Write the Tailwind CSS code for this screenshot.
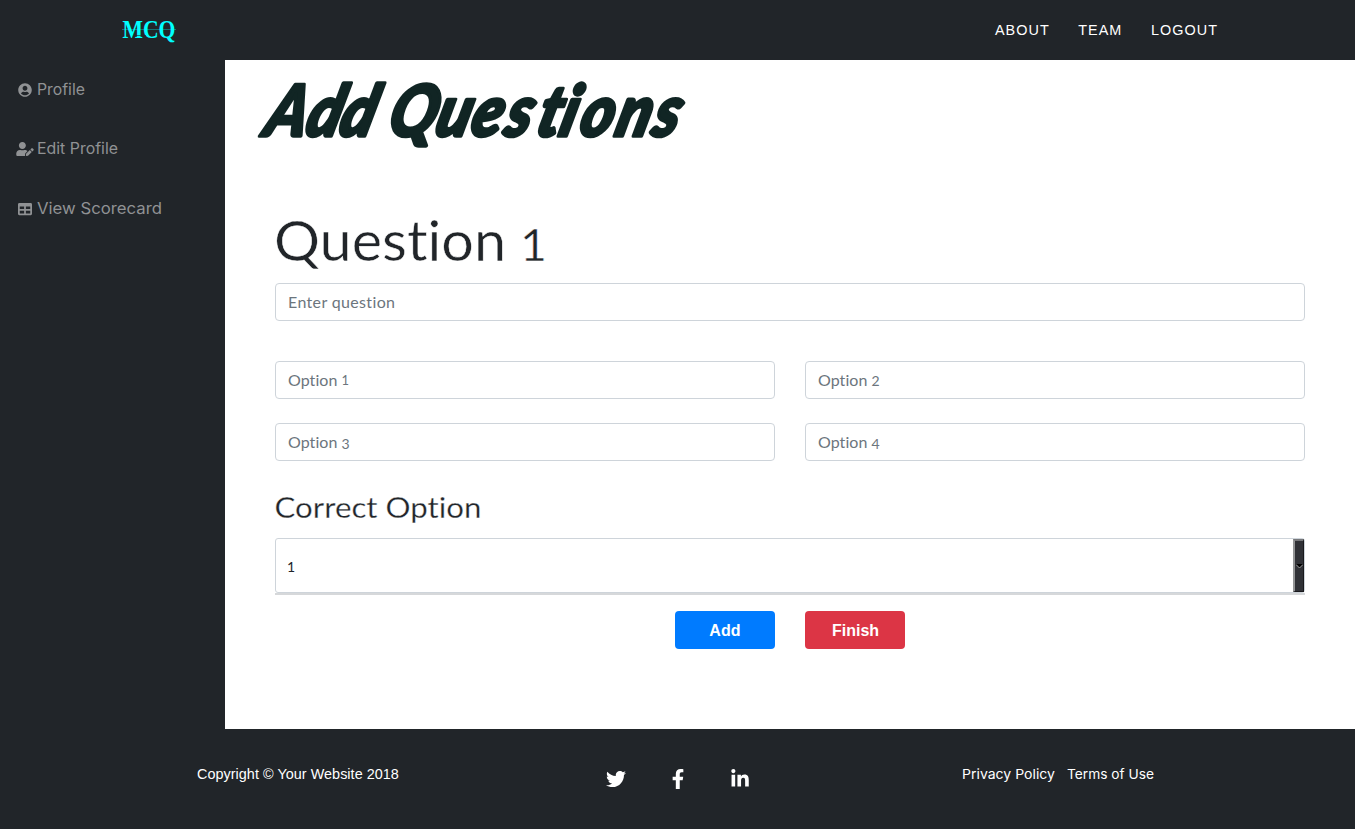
<!DOCTYPE html>
<html lang="en">
<head>
<meta charset="utf-8">
<title>Add Questions</title>
<script src="https://cdn.jsdelivr.net/npm/@tailwindcss/browser@4"></script>
</head>
<body class="w-[1355px] h-[829px] overflow-hidden bg-[#212529] flex flex-col text-[#212529] font-['Lato',sans-serif] [font-variant-ligatures:none]">
<nav class="h-[60px] shrink-0 flex items-center justify-between pl-[122px] pr-[137px]">
  <a class="text-[#00ffff]"><svg class="block w-[70px] h-[40px]" viewBox="0 0 70 40"><text x="0.5" y="27.500" textLength="53" lengthAdjust="spacingAndGlyphs" font-family="Liberation Serif, serif" font-weight="700" font-size="25" fill="currentColor">MCQ</text><path d="M12 25.500h12" stroke="#212529" stroke-width="0.6"/><path d="M0 19.500H54" stroke="currentColor" stroke-width="0.7" opacity=".5"/></svg></a>
  <div class="flex gap-[28.5px] text-white text-[14.4px] leading-[22px] tracking-[1.05px] font-['Liberation_Sans',sans-serif]">
    <a class="-ml-2">ABOUT</a><a>TEAM</a><a>LOGOUT</a>
  </div>
</nav>
<div class="h-[669px] shrink-0 flex">
  <aside class="w-[225px] pt-[17.5px] pl-4 flex flex-col gap-[35.5px] text-[#909294] font-['Inter',sans-serif]">
    <a class="flex items-center h-6"><svg class="w-[18px] h-[14px] mr-[3px]" viewBox="0 0 496 512" fill="currentColor"><path d="M248 8C111 8 0 119 0 256s111 248 248 248 248-111 248-248S385 8 248 8zm0 96c48.600 0 88 39.400 88 88s-39.400 88-88 88-88-39.400-88-88 39.400-88 88-88zm0 344c-58.700 0-111.300-26.600-146.500-68.200 18.800-35.400 55.600-59.800 98.500-59.800 2.400 0 4.800.4 7.100 1.100 13 4.200 26.600 6.900 40.900 6.900s28-2.700 40.900-6.900c2.300-.7 4.700-1.100 7.100-1.100 42.900 0 79.700 24.400 98.500 59.800C359.300 421.400 306.700 448 248 448z"/></svg><svg class="w-[130px] h-6" viewBox="0 0 130 24"><text y="17" textLength="48" lengthAdjust="spacingAndGlyphs" font-size="15.500" fill="currentColor">Profile</text></svg></a>
    <a class="flex items-center h-6"><svg class="w-[18px] h-[14px] mr-[3px]" viewBox="0 0 640 512" fill="currentColor"><path d="M224 256c70.700 0 128-57.300 128-128S294.700 0 224 0 96 57.300 96 128s57.300 128 128 128zm89.600 32h-16.700c-22.200 10.200-46.900 16-72.900 16s-50.600-5.800-72.900-16h-16.700C60.200 288 0 348.200 0 422.400V464c0 26.500 21.500 48 48 48h274.900c-2.400-6.800-3.400-14-2.600-21.300l6.800-60.900 1.200-11.100 7.900-7.900 77.300-77.300c-24.500-27.700-60-45.500-99.900-45.500zm45.300 145.300l-6.800 61c-1.100 10.200 7.500 18.800 17.600 17.600l60.900-6.800 137.900-137.900-71.700-71.700-137.900 137.800zM633 268.900L595.100 231c-9.300-9.300-24.500-9.300-33.800 0l-37.800 37.800-4.100 4.100 71.800 71.700 41.800-41.800c9.300-9.400 9.300-24.500 0-33.900z"/></svg><svg class="w-[130px] h-6" viewBox="0 0 130 24"><text y="16.500" textLength="81" lengthAdjust="spacingAndGlyphs" font-size="15.500" fill="currentColor">Edit Profile</text></svg></a>
    <a class="flex items-center h-6"><svg class="w-[18px] h-[14px] mr-[3px]" viewBox="0 0 512 512" fill="currentColor"><path d="M464 32H48C21.500 32 0 53.500 0 80v352c0 26.500 21.500 48 48 48h416c26.500 0 48-21.500 48-48V80c0-26.500-21.500-48-48-48zM224 416H64v-96h160v96zm0-160H64v-96h160v96zm224 160H288v-96h160v96zm0-160H288v-96h160v96z"/></svg><svg class="w-[130px] h-6" viewBox="0 0 130 24"><text y="17" textLength="125" lengthAdjust="spacingAndGlyphs" font-size="15.500" fill="currentColor">View Scorecard</text></svg></a>
  </aside>
  <main class="w-[1130px] bg-white px-[50px] flex flex-col">
    <h1 class="h-[100px] -ml-5 text-[#112524]"><svg class="w-[560px] h-[100px]" viewBox="0 0 560 100"><g transform="translate(7 76) skewX(-15) scale(.88 1)" font-family="Lato, sans-serif" font-style="italic" font-weight="900" font-size="71" fill="currentColor" stroke="currentColor" stroke-width="3.500" stroke-linejoin="round"><text x="0 47 85 125 140 194 234 273 309 335 358 399 441">Add Questions</text></g></svg></h1>
    <h2 class="h-[84px] mt-[39px]"><svg class="w-[300px] h-[84px]" viewBox="0 0 300 84"><g font-weight="400" font-size="56" fill="currentColor" stroke="#fff" stroke-width=".5"><text x="-1" y="62" textLength="232" lengthAdjust="spacingAndGlyphs">Question</text><text x="245" y="62" textLength="27" lengthAdjust="spacingAndGlyphs" font-size="44">1</text></g></svg></h2>
    <div class="h-[38px] border border-[#ced4da] rounded px-3 flex items-center text-[#6c757d]"><svg class="w-[120px] h-6" viewBox="0 0 120 24"><text y="17.500" textLength="107" font-size="16" fill="currentColor">Enter question</text></svg></div>
    <div class="mt-10 grid grid-cols-2 gap-x-[30px] gap-y-6 text-[#6c757d] text-base">
      <div class="h-[38px] border border-[#ced4da] rounded px-3 flex items-center tracking-[.05px]">Option&nbsp;<span class="text-[13px] pt-[2px]">1</span></div>
      <div class="h-[38px] border border-[#ced4da] rounded px-3 flex items-center tracking-[.05px]">Option&nbsp;<span class="text-[14px] pt-px">2</span></div>
      <div class="h-[38px] border border-[#ced4da] rounded px-3 flex items-center tracking-[.05px]">Option&nbsp;<span class="text-[14px] pt-[3px]">3</span></div>
      <div class="h-[38px] border border-[#ced4da] rounded px-3 flex items-center tracking-[.05px]">Option&nbsp;<span class="text-[14px] pt-[3px]">4</span></div>
    </div>
    <h3 class="mt-6 h-[53px]"><svg class="w-[230px] h-[53px]" viewBox="0 0 230 53"><text x="-.5" y="33" textLength="207" lengthAdjust="spacingAndGlyphs" font-size="29.500" fill="currentColor" stroke="#fff" stroke-width=".3">Correct Option</text></svg></h3>
    <div class="h-[57px] border-b-2 border-[#d6d8da]">
      <div class="h-[55px] border border-[#ced4da] rounded-[3px] flex items-stretch justify-between pl-[11px]">
        <span class="self-center text-[14px] pt-[2px] text-[#212529]">1</span>
        <span class="w-[11px] bg-[#303136] border-t-2 border-l-2 border-t-[#77787b] border-l-[#939495] border-r border-b border-r-[#19191c] border-b-[#19191c] flex items-center justify-center"><svg class="w-[7px] h-[5px] shrink-0" viewBox="0 0 7 5"><path d="M0 0h7L3.500 4z" fill="#000"/><path d="M0 .5L3.500 4 7 .5" fill="none" stroke="#b9b9b9" stroke-width=".8"/></svg></span>
      </div>
    </div>
    <div class="mt-4 flex justify-center gap-[30px] text-white font-bold text-base tracking-[.2px] font-['Liberation_Sans',sans-serif]">
      <button class="w-[100px] h-[38px] pt-[2px] rounded bg-[#007bff]">Add</button>
      <button class="w-[100px] h-[38px] pt-[2px] pl-px rounded bg-[#dc3545] tracking-normal">Finish</button>
    </div>
  </main>
</div>
<footer class="h-[100px] flex items-start pt-[33px] text-white text-[14.4px] leading-6">
  <span class="ml-[197px] w-[409px] shrink-0 tracking-[.04px] font-['Liberation_Sans',sans-serif]">Copyright © Your Website 2018</span>
  <div class="w-[356px] shrink-0 flex pt-[6.5px]">
    <svg class="w-5 h-5" viewBox="0 0 512 512" fill="currentColor"><path d="M459.370 151.716c.325 4.548.325 9.097.325 13.645 0 138.720-105.583 298.558-298.558 298.558-59.452 0-114.680-17.219-161.137-47.106 8.447.974 16.568 1.299 25.340 1.299 49.055 0 94.213-16.568 130.274-44.832-46.132-.975-84.792-31.188-98.112-72.772 6.498.974 12.995 1.624 19.818 1.624 9.421 0 18.843-1.300 27.614-3.573-48.081-9.747-84.143-51.980-84.143-102.985v-1.299c13.969 7.797 30.214 12.670 47.431 13.319-28.264-18.843-46.781-51.005-46.781-87.391 0-19.492 5.197-37.360 14.294-52.954 51.655 63.675 129.300 105.258 216.365 109.807-1.624-7.797-2.599-15.918-2.599-24.040 0-57.828 46.782-104.934 104.934-104.934 30.213 0 57.502 12.670 76.670 33.137 23.715-4.548 46.456-13.320 66.599-25.340-7.798 24.366-24.366 44.833-46.132 57.827 21.117-2.273 41.584-8.122 60.426-16.243-14.292 20.791-32.161 39.308-52.628 54.253z"/></svg>
    <svg class="w-5 h-5 ml-[42px]" viewBox="0 0 320 512" fill="currentColor"><path d="M279.140 288l14.220-92.660h-88.910v-60.130c0-25.350 12.420-50.060 52.240-50.060h40.420V6.260S260.430 0 225.360 0c-73.220 0-121.080 44.380-121.080 124.720v70.620H22.890V288h81.390v224h100.170V288z"/></svg>
    <svg class="w-5 h-5 ml-[42px]" viewBox="0 0 448 512" fill="currentColor"><path d="M100.280 448H7.400V148.900h92.880zM53.790 108.100C24.090 108.100 0 83.500 0 53.800a53.790 53.790 0 0 1 107.580 0c0 29.700-24.100 54.300-53.790 54.300zM447.900 448h-92.680V302.400c0-34.700-.7-79.200-48.290-79.200-48.290 0-55.690 37.700-55.690 76.700V448h-92.780V148.900h89.080v40.800h1.300c12.400-23.500 42.690-48.300 87.880-48.300 94 0 111.280 61.900 111.280 142.300V448z"/></svg>
  </div>
  <svg class="w-[200px] h-6 font-['Inter',sans-serif]" viewBox="0 0 200 24"><g font-size="13.500" fill="currentColor"><text y="17" textLength="93" lengthAdjust="spacingAndGlyphs">Privacy Policy</text><text x="105" y="17" textLength="87" lengthAdjust="spacingAndGlyphs">Terms of Use</text></g></svg>
</footer>
</body>
</html>
